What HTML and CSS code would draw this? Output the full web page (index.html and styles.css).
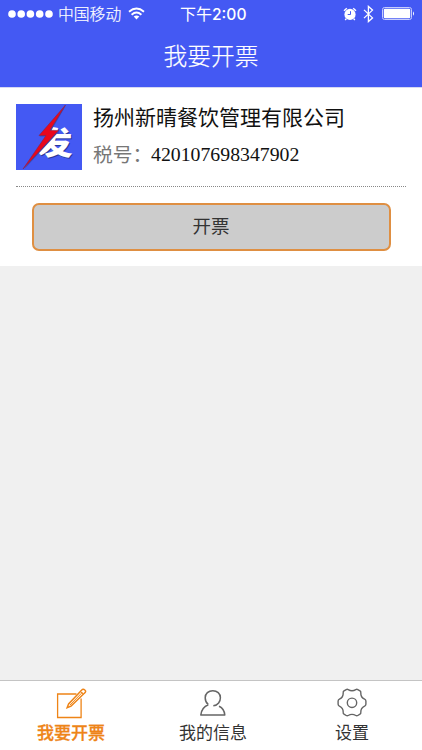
FILE: index.html
```html
<!DOCTYPE html>
<html lang="zh-CN">
<head>
<meta charset="utf-8">
<title>我要开票</title>
<link rel="stylesheet" href="styles.css">
</head>
<body>
<div class="app">
  <header class="header">
    <div class="status">
      <div class="status-left">
        <svg class="signal" width="45" height="8" viewBox="0 0 45 8"><g fill="#fff"><circle cx="4" cy="4" r="3.8"/><circle cx="13.2" cy="4" r="3.8"/><circle cx="22.4" cy="4" r="3.8"/><circle cx="31.7" cy="4" r="3.8"/><circle cx="41" cy="4" r="3.8"/></g></svg>
        <span class="carrier">中国移动</span>
        <svg class="wifi" width="17" height="13" viewBox="0 0 17 13"><g fill="none" stroke="#fff" stroke-width="1.9"><path d="M1 4.7Q8.5-1.7 16 4.7"/><path d="M3.6 7.7Q8.5 3.4 13.4 7.7"/></g><path d="M5.7 9.6Q8.5 7.4 11.3 9.6L8.5 12.4Z" fill="#fff"/></svg>
      </div>
      <span class="clock">下午<b>2:00</b></span>
      <div class="status-right">
        <svg width="14" height="14" viewBox="0 0 14 14"><circle cx="7" cy="7.4" r="5.6" fill="#fff"/><path d="M1 3.7 3.8 1.3M13 3.7 10.2 1.3M3.2 11.7 2.2 13M10.8 11.7 11.8 13" stroke="#fff" stroke-width="1.4"/><path d="M7.5 4.2V7.5H4.7" fill="none" stroke="#4459f3" stroke-width="1"/></svg>
        <svg class="bluetooth" width="11" height="18" viewBox="0 0 11 18"><path d="M1 4.9 9.5 12.9 5.4 16.6V1.4L9.5 5.1 1 13.1" fill="none" stroke="#fff" stroke-width="1.3"/></svg>
        <svg class="battery" width="33" height="13" viewBox="0 0 33 13"><rect x=".5" y=".5" width="29" height="12" rx="2" fill="none" stroke="#c7cdfc"/><rect x="1.8" y="1.8" width="26.4" height="9.4" rx="1" fill="#fff"/><path d="M31 4.2Q33 6.5 31 8.8Z" fill="#fff"/></svg>
      </div>
    </div>
    <h1 class="title">我要开票</h1>
  </header>
  <main class="content">
    <section class="card">
      <div class="company">
        <svg class="logo" width="66" height="66" viewBox="0 0 66 66">
          <defs><clipPath id="mark"><path d="M37 20H60V60H18V46L30 37Z"/></clipPath></defs>
          <rect width="66" height="66" fill="#4459f3"/>
          <g clip-path="url(#mark)">
            <text class="logo-shadow" transform="translate(21.5 50.6) scale(1 .86)">发</text>
            <text class="logo-char" transform="translate(20.5 49.8) scale(1 .86)">发</text>
          </g>
          <path d="M50 1.5 23.5 32.5 31 32.5 8 65.5 43 27.5 35 27Z" fill="#3348bd"/>
          <path d="M49.5 1 23 31.5 30 31.5 7 65 42.5 26.5 34 26.2Z" fill="#e9061d" stroke="#86234e" stroke-width=".6"/>
        </svg>
        <div class="details">
          <h2 class="name">扬州新晴餐饮管理有限公司</h2>
          <p class="tax"><span class="tax-label">税号：</span><span class="tax-number">420107698347902</span></p>
        </div>
      </div>
      <button class="invoice">开票</button>
    </section>
  </main>
  <nav class="tabs">
    <a class="tab active">
      <svg width="32" height="31" viewBox="0 0 32 31"><g fill="none" stroke="#ee8417" stroke-width="1.3"><path d="M21.5 6H2.6v23.5h23.5V10.5"/><path d="M12.2 19.6 13.6 16 26.3 2.6Q27.9.4 29.8 2T29.3 5.3L16 18.1Z" stroke-width="1.5"/><path d="M14.8 17.2 27.5 4.2M25.3 3.5 28.5 6.3" stroke-width="1"/></g></svg>
      <span>我要开票</span>
    </a>
    <a class="tab">
      <svg width="32" height="31" viewBox="0 0 32 31"><g fill="none" stroke="#656565" stroke-width="1.5" stroke-linejoin="round"><path d="M11.3 16.7C9 14.8 8.2 12 8.2 9.7 8.2 5.5 11.5 2.7 15.8 2.7S23.4 5.5 23.4 9.7C23.4 13.4 21 17.3 16.3 17.8M11.3 16.7C7 18.4 4.4 21.5 3.8 27H27.8C27.5 22.5 25.5 19.8 22 18.2"/></g></svg>
      <span>我的信息</span>
    </a>
    <a class="tab">
      <svg width="32" height="31" viewBox="0 0 32 31"><g fill="none" stroke="#656565" stroke-width="1.4" stroke-linejoin="round"><path d="M12.2 1.6Q16 4 19.8 1.6Q20.8 1 21.8 1.6L24 2.9Q25 3.5 24.8 4.8Q24.6 9.6 28.6 11.2Q29.8 11.7 29.9 13V16.2Q29.8 17.6 28.6 18.2Q24.6 19.9 24.8 24.5Q25 25.6 24 26.2L21.8 27.5Q20.8 28.1 19.8 27.5Q16 25.2 12.2 27.5Q11.2 28.1 10.2 27.5L8 26.2Q7 25.6 7.2 24.5Q7.4 19.9 3.4 18.2Q2.2 17.6 2.1 16.2V13Q2.2 11.7 3.4 11.2Q7.4 9.6 7.2 4.8Q7 3.5 8 2.9L10.2 1.6Q11.2 1 12.2 1.6Z"/><circle cx="16" cy="14.8" r="4.7"/></g></svg>
      <span>设置</span>
    </a>
  </nav>
</div>
</body>
</html>
```
FILE: styles.css
```css
* { box-sizing: border-box; }
body { margin: 0; font-family: "Noto Sans CJK SC", sans-serif; }
h1, h2, p { margin: 0; font-weight: 400; }
svg { display: block; flex: none; }
.app { width: 422px; height: 750px; display: flex; flex-direction: column; background: #f0f0f0; }
.header { height: 88px; background: #4459f3; border-bottom: 1px solid #d5d8f3; color: #fff; }
.status { height: 27px; display: grid; grid-template-columns: 180px 1fr auto; align-items: center; padding-right: 7px; }
.status-left { display: flex; align-items: center; padding-left: 8px; }
.carrier { font-size: 15.8px; font-weight: 300; -webkit-text-stroke: .2px #fff; line-height: 27px; margin-left: 5px; }
.wifi { margin-left: 7px; }
.clock { font-size: 16px; line-height: 27px; white-space: nowrap; }
.clock b { font: 500 15.6px Inter, sans-serif; }
.status-right { display: flex; align-items: center; }
.bluetooth { margin-left: 6px; }
.battery { margin-left: 8px; }
.title { font-size: 23.7px; font-weight: 300; -webkit-text-stroke: .2px #fff; line-height: 34px; text-align: center; margin-top: 11px; }
.content { flex: 1; }
.card { height: 178px; background: #fff; padding: 16px 16px 0; display: flex; flex-direction: column; }
.company { height: 83px; display: flex; border-bottom: 1px dotted #888; }
.logo-char, .logo-shadow { font: 900 36px "Noto Sans CJK SC", sans-serif; fill: #fff; }
.logo-shadow { fill: #283898; }
.details { margin-left: 11px; white-space: nowrap; }
.name { font-size: 21px; line-height: 24px; color: #111; }
.tax { display: flex; align-items: center; font-size: 19.8px; line-height: 34px; margin-top: 9px; }
.tax-label { width: 58px; color: #777; }
.tax-number { color: #111; font-family: "Liberation Serif", serif; }
.invoice { width: 359px; height: 48px; margin: 16px auto 0; padding: 0 0 4px; border: 2px solid #df8f42; border-radius: 7px; background: #ccc; color: #333; font: 400 18.5px "Noto Sans CJK SC", sans-serif; }
.tabs { height: 70px; display: grid; grid-template-columns: 142px 142px 136px; background: #fff; border-top: 1px solid #c4c4c4; }
.tab { display: flex; flex-direction: column; align-items: center; padding-top: 7px; font-size: 17px; line-height: 25px; color: #333; }
.tab.active { color: #ee8417; font-weight: 500; -webkit-text-stroke: .3px #ee8417; }
```
